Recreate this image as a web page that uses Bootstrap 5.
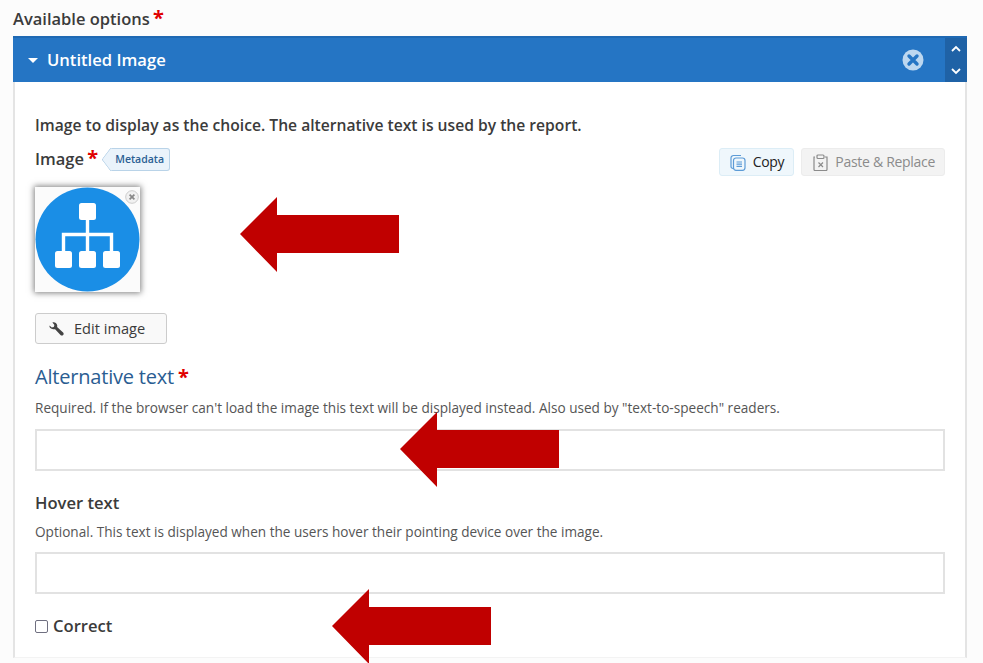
<!DOCTYPE html>
<html lang="en">
<head>
<meta charset="utf-8">
<title>Available options</title>
<link href="https://cdn.jsdelivr.net/npm/bootstrap@5.3.0/dist/css/bootstrap.min.css" rel="stylesheet">
<style>
html,body{height:663px;overflow:hidden}
body{background:#fcfcfc;font-family:"Open Sans",sans-serif;color:#3b3b3b;position:relative;padding:7px 16px 0 13px}
.top-title{font-size:16.5px;font-weight:600;line-height:24px;height:29px;margin:0}
.req{color:#e00000;font-size:20px;font-weight:700;line-height:10px;position:relative;top:0;margin-left:-1px}
.opt-frame{background:#fff;height:622px}
.opt-head{background:#2575c4;height:46px;color:#fff;border-top:2px solid #1f69b3}
.opt-title{font-size:16.6px;font-weight:600;line-height:44px;margin-left:9px}
.caret-mark{width:0;height:0;border-left:5px solid transparent;border-right:5px solid transparent;border-top:5px solid #fff;margin-left:15px}
.order-box{width:22px;background:#1f62a6;height:44px;padding:5px 0}
.close-ico{margin-right:21px}
.opt-body{border:solid #e4e4e4;border-width:0 2px 1px 2px;border-bottom-color:#f3f3f3;padding:33px 20px 0 20px;height:576px}
.lead-line{font-size:15.65px;font-weight:600;line-height:20px;margin:0 0 12px}
.img-row{height:29px}
.fld-name{font-size:16.5px;font-weight:600;line-height:24px}
.meta-tag{font-size:10.5px;font-weight:600;color:#2b5f93;background:#eaf3fb;border:1px solid #b9d3e8;border-left:0;border-radius:0 3px 3px 0;height:23px;line-height:21px;padding:0 5px 0 4px;margin-left:13px;position:relative;display:inline-block}
.meta-tag::before{content:"";position:absolute;left:-8px;top:3px;width:15px;height:15px;background:#eaf3fb;border:1px solid #b9d3e8;border-width:0 0 1px 1px;transform:rotate(45deg) skew(8deg,8deg);border-radius:0 0 0 2px}
.meta-txt{position:relative}
.mini-btn{font-size:14px;height:28px;border-radius:3px;padding:0 9px 0 10px;display:inline-flex;align-items:center;gap:7px;line-height:1;letter-spacing:-.3px}
.copy-btn{background:#eff7fc;border:1px solid #dcedf6;color:#222}
.paste-btn{background:#f3f3f3;border:1px solid #ececec;color:#8b8b8b}
.btn-set{gap:7px;margin-top:1px}
.thumb{width:105px;height:105px;box-shadow:0 0 6px 1px rgba(0,0,0,.5);background:#fbfbfb;position:relative;margin-top:11px}
.thumb-x{position:absolute;right:1px;top:3px;width:14px;height:14px}
.edit-btn{font-size:14.6px;height:31px;width:132px;margin-top:21px;border:1px solid #ccc;border-radius:3px;background:#f9f9f9;color:#3b3b3b;display:flex;align-items:center;gap:10px;padding:0 0 0 12px;line-height:1}
.alt-name{font-size:20px;font-weight:500;color:#2a5d92;line-height:28px;margin-top:19px;letter-spacing:-.2px}
.hint{font-size:13.6px;color:#555;line-height:18px;margin:0}
.hint-a{margin:8px 0 12px}
.hint-b{margin:9px 0 11px}
.txt-box{display:block;width:100%;height:42px;border:2px solid #e2e2e2;background:#fff;border-radius:0;padding:0;outline:0}
.hov-name{font-size:16.6px;font-weight:600;line-height:22px;margin-top:21px}
.chk-row{font-size:16.6px;font-weight:600;line-height:22px;margin-top:21px;gap:5px}
.chk-mark{width:13px;height:13px;border:1.5px solid #6f6f80;border-radius:2px;background:#fff}
.red-arrow{position:absolute;width:160px;height:77px;display:block}
.arrow-one{left:240px;top:196px}
.arrow-two{left:399.500px;top:411px}
.arrow-three{left:332px;top:588px}
</style>
</head>
<body>
<h1 class="top-title">Available options <span class="req">*</span></h1>
<section class="opt-frame d-flex flex-column">
  <header class="opt-head d-flex align-items-center">
    <span class="caret-mark"></span>
    <span class="opt-title flex-grow-1">Untitled Image</span>
    <svg class="close-ico" width="22" height="22" viewBox="0 0 22 22"><circle cx="11" cy="11" r="10.5" fill="#bcd7f0"/><path d="M7 7l8 8M15 7l-8 8" stroke="#2575c4" stroke-width="3.4" stroke-linecap="round"/></svg>
    <div class="order-box d-flex flex-column align-items-center justify-content-between">
      <svg width="12" height="12" viewBox="0 0 12 12"><path d="M2 8l4-4 4 4" fill="none" stroke="#fff" stroke-width="1.8"/></svg>
      <svg width="12" height="12" viewBox="0 0 12 12"><path d="M2 4l4 4 4-4" fill="none" stroke="#fff" stroke-width="1.8"/></svg>
    </div>
  </header>
  <div class="opt-body">
    <p class="lead-line">Image to display as the choice. The alternative text is used by the report.</p>
    <div class="img-row d-flex align-items-start justify-content-between">
      <div class="d-flex align-items-center">
        <span class="fld-name">Image <span class="req">*</span></span>
        <span class="meta-tag"><span class="meta-txt">Metadata</span></span>
      </div>
      <div class="btn-set d-flex">
        <span class="mini-btn copy-btn">
          <svg width="16" height="17" viewBox="0 0 16 17" fill="none" stroke="#5c9bd6" stroke-width="1.2"><path d="M4 14.5H3a2 2 0 0 1-2-2V4a2.500 2.500 0 0 1 2.500-2.500H11"/><rect x="3.500" y="4" width="11.500" height="12.300" rx="2.500"/><path d="M6.500 8h5.500M6.500 10.200h5.500M6.500 12.400h5.500"/></svg>
          Copy</span>
        <span class="mini-btn paste-btn">
          <svg width="16" height="17" viewBox="0 0 16 17" fill="none" stroke="#8b8b8b" stroke-width="1.200"><path d="M3 3H2v12.500a1 1 0 0 0 1 1h11a1 1 0 0 0 1-1V3h-2"/><rect x="5" y="1" width="7" height="3.500" rx="1"/><path d="M6.500 8.500l4.500 4.500M11 8.500l-4.500 4.500"/></svg>
          Paste &amp; Replace</span>
      </div>
    </div>
    <div class="thumb">
      <svg width="105" height="105" viewBox="0 0 105 105">
        <circle cx="52.500" cy="52.500" r="52" fill="#1a8ee6"/>
        <path d="M52.500 30v38M28.500 64V47.500h48V64" fill="none" stroke="#fff" stroke-width="3.400"/>
        <rect x="44" y="16" width="17" height="17" rx="2.500" fill="#fff"/>
        <rect x="20" y="64" width="17" height="17" rx="2.500" fill="#fff"/>
        <rect x="44" y="64" width="17" height="17" rx="2.500" fill="#fff"/>
        <rect x="68" y="64" width="17" height="17" rx="2.500" fill="#fff"/>
      </svg>
      <svg class="thumb-x" viewBox="0 0 14 14"><circle cx="7" cy="7" r="6.300" fill="#f1f1f1" stroke="#ccc"/><path d="M4.600 4.600l4.800 4.800M9.400 4.600l-4.800 4.800" stroke="#888" stroke-width="1.700"/></svg>
    </div>
    <button type="button" class="edit-btn">
      <svg width="16" height="16" viewBox="0 0 16 16"><path d="M1.500 4.500l2.300 2 2-.6.600-2-2-2.300c2-.8 4.300.4 4.800 2.600.1.700 0 1.300-.1 1.800l6 5.400c.8.800.8 2 0 2.700-.7.700-1.900.7-2.600-.1L7.100 8.200c-.6.200-1.200.2-1.900.1C2.900 7.900 1 6.600 1.500 4.500z" fill="#444"/></svg>
      Edit image</button>
    <div class="alt-name">Alternative text <span class="req">*</span></div>
    <p class="hint hint-a">Required. If the browser can't load the image this text will be displayed instead. Also used by "text-to-speech" readers.</p>
    <input class="txt-box" type="text" aria-label="Alternative text">
    <div class="hov-name">Hover text</div>
    <p class="hint hint-b">Optional. This text is displayed when the users hover their pointing device over the image.</p>
    <input class="txt-box" type="text" aria-label="Hover text">
    <div class="chk-row d-flex align-items-center"><span class="chk-mark"></span>Correct</div>
  </div>
</section>
<svg class="red-arrow arrow-one" viewBox="0 0 160 77"><path d="M0 38L37 1V19H159V57H37V76z" fill="#c00000"/></svg>
<svg class="red-arrow arrow-two" viewBox="0 0 160 77"><path d="M0 38L37 1V19H159V57H37V76z" fill="#c00000"/></svg>
<svg class="red-arrow arrow-three" viewBox="0 0 160 77"><path d="M0 38L37 1V19H159V57H37V76z" fill="#c00000"/></svg>
<script src="https://cdn.jsdelivr.net/npm/bootstrap@5.3.0/dist/js/bootstrap.bundle.min.js"></script>
</body>
</html>
